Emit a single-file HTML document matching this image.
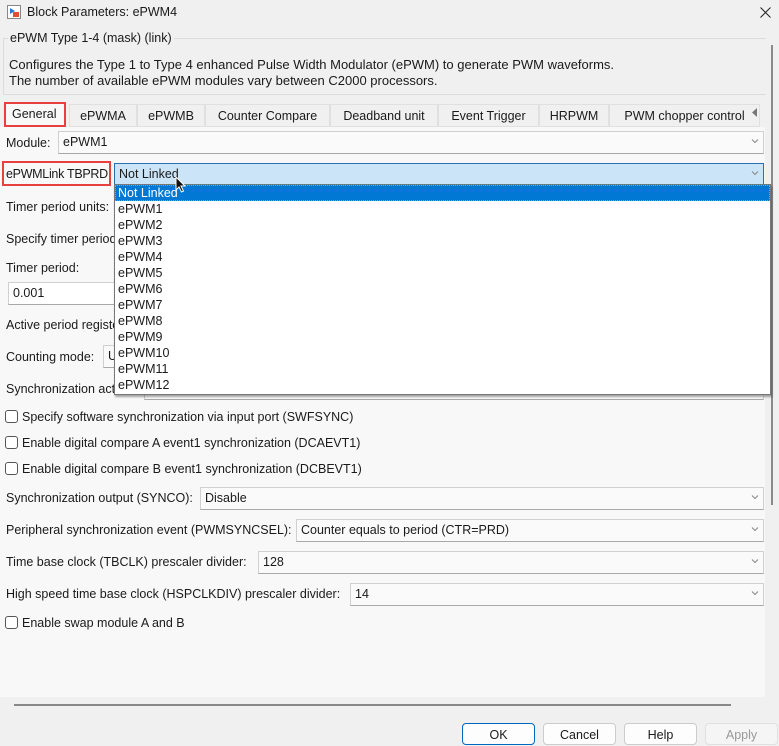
<!DOCTYPE html>
<html><head><meta charset="utf-8"><style>
*{box-sizing:border-box;margin:0;padding:0}
body{width:779px;height:746px;overflow:hidden;background:#f0f0f0;font-family:"Liberation Sans",sans-serif;font-size:12.5px;color:#1a1a1a;position:relative}
.a{position:absolute;white-space:nowrap}
.fld{position:absolute;background:#fafafa;border:1px solid #d0d0d0;border-bottom-color:#a8a8a8;height:23px;padding:3px 4px}
.chev{position:absolute;right:3px;top:4px;width:10px;height:10px}
.cb{position:absolute;width:13px;height:13px;border:1px solid #555;border-radius:3px;background:#fff}
.tab{position:absolute;top:104px;height:23px;border:1px solid #e0e0e0;background:#f0f0f0;text-align:center;padding-top:4px}
.btn{position:absolute;top:723px;height:22px;border:1px solid #ccc;border-radius:4px;background:#fdfdfd;text-align:center;padding-top:4px}
.it{position:absolute;left:118px}
</style></head><body>
<svg class="a" style="left:7px;top:5px" width="14" height="14"><rect x="0.5" y="0.5" width="13" height="13" fill="#fff" stroke="#888"/><path d="M3 3 L8 6 L3 9Z" fill="#2a7ad6"/><rect x="6" y="7" width="6" height="5" fill="#d9532c"/></svg>
<div class="a" style="left:27px;top:5px">Block Parameters: ePWM4</div>
<svg class="a" style="left:760px;top:7px" width="11" height="11"><path d="M0.5 0.5L10.5 10.5M10.5 0.5L0.5 10.5" stroke="#222" stroke-width="1"/></svg>
<div class="a" style="left:3px;top:38px;width:763px;height:57px;border:1px solid #dcdcdc;border-right:none"></div>
<div class="a" style="left:8px;top:31px;background:#f0f0f0;padding:0 2px">ePWM Type 1-4 (mask) (link)</div>
<div class="a" style="left:9px;top:57px;font-size:13px">Configures the Type 1 to Type 4 enhanced Pulse Width Modulator (ePWM) to generate PWM waveforms.</div>
<div class="a" style="left:9px;top:73px;font-size:13px">The number of available ePWM modules vary between C2000 processors.</div>
<div class="a" style="left:771px;top:45px;width:2px;height:460px;background:#8a8a8a"></div>
<div class="tab" style="left:4px;width:62px;background:#f8f8f8;border-color:#f8f8f8"></div>
<div class="a" style="left:4px;top:102px;width:62px;height:25px;border:2px solid #e8403f;"></div>
<div class="a" style="left:12px;top:107px">General</div>
<div class="tab" style="left:69px;width:68px">ePWMA</div>
<div class="tab" style="left:137px;width:68px">ePWMB</div>
<div class="tab" style="left:205px;width:125px">Counter Compare</div>
<div class="tab" style="left:330px;width:108px">Deadband unit</div>
<div class="tab" style="left:438px;width:101px">Event Trigger</div>
<div class="tab" style="left:539px;width:70px">HRPWM</div>
<div class="tab" style="left:609px;width:151px">PWM chopper control</div>
<svg class="a" style="left:752px;top:108px" width="6" height="9"><path d="M5 0L0 4.5L5 9Z" fill="#777"/></svg>
<div class="a" style="left:0;top:127px;width:765px;height:570px;background:#f8f8f8"></div>
<div class="a" style="left:6px;top:136px">Module:</div>
<div class="fld" style="left:58px;top:131px;width:706px">ePWM1<svg class="chev" viewBox="0 0 10 10"><path d="M2 3.5L5 6.5L8 3.5" stroke="#888" fill="none"/></svg></div>
<div class="a" style="left:2px;top:161px;width:109px;height:25px;border:2px solid #e8403f"></div>
<div class="a" style="left:6px;top:167px;letter-spacing:-0.3px">ePWMLink TBPRD</div>
<div class="fld" style="left:114px;top:163px;width:650px;background:#cce4f7;border:1px solid #2a6fb0;border-bottom:none">Not Linked<svg class="chev" viewBox="0 0 10 10"><path d="M2 3.5L5 6.5L8 3.5" stroke="#888" fill="none"/></svg></div>
<div class="a" style="left:6px;top:200px">Timer period units:</div>
<div class="a" style="left:6px;top:232px">Specify timer period</div>
<div class="a" style="left:6px;top:261px">Timer period:</div>
<div class="fld" style="left:8px;top:282px;width:200px;background:#fff">0.001</div>
<div class="a" style="left:6px;top:318px">Active period register</div>
<div class="a" style="left:6px;top:350px">Counting mode:</div>
<div class="fld" style="left:103px;top:345px;width:100px">Up</div>
<div class="a" style="left:6px;top:382px">Synchronization action</div>
<div class="fld" style="left:144px;top:377px;width:620px"></div>
<div class="a" style="left:114px;top:184px;width:657px;height:211px;background:#fff;border:1px solid #777;box-shadow:1px 2px 2px rgba(0,0,0,.35)"></div>
<div class="a" style="left:115px;top:185px;width:655px;height:16px;background:#0078d4;border:1px dotted #c88"></div>
<div class="it" style="top:186px;color:#fff">Not Linked</div>
<div class="it" style="top:202px">ePWM1</div>
<div class="it" style="top:218px">ePWM2</div>
<div class="it" style="top:234px">ePWM3</div>
<div class="it" style="top:250px">ePWM4</div>
<div class="it" style="top:266px">ePWM5</div>
<div class="it" style="top:282px">ePWM6</div>
<div class="it" style="top:298px">ePWM7</div>
<div class="it" style="top:314px">ePWM8</div>
<div class="it" style="top:330px">ePWM9</div>
<div class="it" style="top:346px">ePWM10</div>
<div class="it" style="top:362px">ePWM11</div>
<div class="it" style="top:378px">ePWM12</div>
<svg class="a" style="left:175px;top:176px" width="12" height="17"><path d="M1 1L1 14L4 11L6.5 16L8.5 15L6 10L10 10Z" fill="#111" stroke="#fff" stroke-width="1"/></svg>
<div class="cb" style="left:5px;top:410px"></div><div class="a" style="left:22px;top:410px">Specify software synchronization via input port (SWFSYNC)</div>
<div class="cb" style="left:5px;top:436px"></div><div class="a" style="left:22px;top:436px">Enable digital compare A event1 synchronization (DCAEVT1)</div>
<div class="cb" style="left:5px;top:462px"></div><div class="a" style="left:22px;top:462px">Enable digital compare B event1 synchronization (DCBEVT1)</div>
<div class="a" style="left:6px;top:491px">Synchronization output (SYNCO):</div>
<div class="fld" style="left:200px;top:487px;width:564px">Disable<svg class="chev" viewBox="0 0 10 10"><path d="M2 3.5L5 6.5L8 3.5" stroke="#888" fill="none"/></svg></div>
<div class="a" style="left:6px;top:523px">Peripheral synchronization event (PWMSYNCSEL):</div>
<div class="fld" style="left:296px;top:519px;width:468px">Counter equals to period (CTR=PRD)<svg class="chev" viewBox="0 0 10 10"><path d="M2 3.5L5 6.5L8 3.5" stroke="#888" fill="none"/></svg></div>
<div class="a" style="left:6px;top:555px">Time base clock (TBCLK) prescaler divider:</div>
<div class="fld" style="left:258px;top:551px;width:506px">128<svg class="chev" viewBox="0 0 10 10"><path d="M2 3.5L5 6.5L8 3.5" stroke="#888" fill="none"/></svg></div>
<div class="a" style="left:6px;top:587px">High speed time base clock (HSPCLKDIV) prescaler divider:</div>
<div class="fld" style="left:350px;top:583px;width:414px">14<svg class="chev" viewBox="0 0 10 10"><path d="M2 3.5L5 6.5L8 3.5" stroke="#888" fill="none"/></svg></div>
<div class="cb" style="left:5px;top:616px"></div><div class="a" style="left:22px;top:616px">Enable swap module A and B</div>
<div class="a" style="left:14px;top:704px;width:717px;height:2px;background:#888"></div>
<div class="btn" style="left:462px;width:73px;border-color:#0067c0">OK</div>
<div class="btn" style="left:543px;width:73px">Cancel</div>
<div class="btn" style="left:624px;width:73px">Help</div>
<div class="btn" style="left:705px;width:73px;color:#999;background:#f5f5f5;border-color:#e0e0e0">Apply</div>
</body></html>
